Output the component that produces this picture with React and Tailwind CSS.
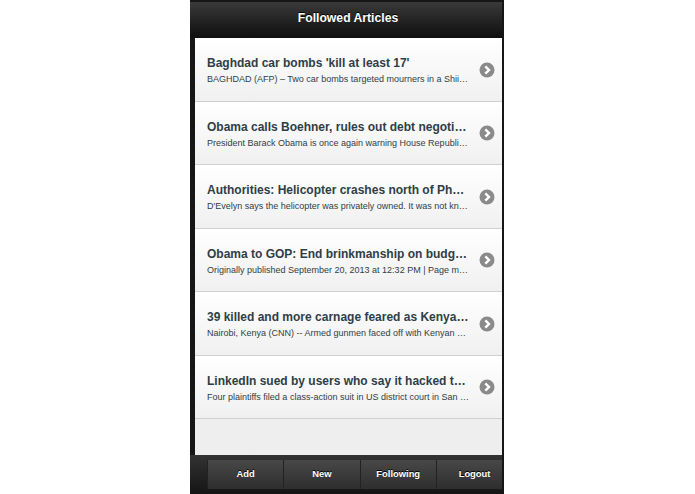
const articles = [
  {
    title: "Baghdad car bombs 'kill at least 17'",
    summary: "BAGHDAD (AFP) – Two car bombs targeted mourners in a Shii…",
  },
  {
    title: "Obama calls Boehner, rules out debt negoti…",
    summary: "President Barack Obama is once again warning House Republi…",
  },
  {
    title: "Authorities: Helicopter crashes north of Ph…",
    summary: "D'Evelyn says the helicopter was privately owned. It was not kn…",
  },
  {
    title: "Obama to GOP: End brinkmanship on budg…",
    summary: "Originally published September 20, 2013 at 12:32 PM | Page m…",
  },
  {
    title: "39 killed and more carnage feared as Kenya…",
    summary: "Nairobi, Kenya (CNN) -- Armed gunmen faced off with Kenyan …",
  },
  {
    title: "LinkedIn sued by users who say it hacked t…",
    summary: "Four plaintiffs filed a class-action suit in US district court in San …",
  },
];

const tabs = ["Add", "New", "Following", "Logout"];

function Chevron() {
  return (
    <svg width="16" height="16" viewBox="0 0 16 16" className="shrink-0">
      <circle cx="8" cy="8" r="7.5" fill="#8a8a8a" />
      <path d="M6.3 4.3 L10 8 L6.3 11.7" fill="none" stroke="#fff" strokeWidth="2.4" />
    </svg>
  );
}

export default function App() {
  return (
    <div className="flex h-[494px] w-[695px] justify-center overflow-hidden bg-white font-['Liberation_Sans',Arial,sans-serif]">
      <div className="ml-[-1px] flex h-full w-[314px] flex-col bg-[#161616] pr-[2px] pt-[2px]">
        {/* Header */}
        <div className="flex h-[36px] shrink-0 items-center justify-center bg-gradient-to-b from-[#3a3a3a] to-[#0f0f0f] pb-[4px] pl-[4px] text-[12.2px] font-bold text-white [text-shadow:0_-1px_0_#000]">
          Followed Articles
        </div>

        {/* List */}
        <div className="ml-[5px] flex h-[417px] shrink-0 flex-col bg-[#eeeeee]">
          {articles.map((article) => (
            <div
              key={article.title}
              className="flex h-[63.5px] shrink-0 items-center gap-[9px] border-b border-[#d0d0d0] bg-gradient-to-b from-white to-[#f0f0f0] pl-[12px] pr-[7px] pt-[1px]"
            >
              <div className="min-w-0 flex-1">
                <h3 className="mt-[1px] whitespace-nowrap text-[12px] font-bold leading-[17px] text-[#2f3e46]">
                  {article.title}
                </h3>
                <p className="mt-[1px] whitespace-nowrap text-[9px] leading-[12px] text-[#2f3e46]">
                  {article.summary}
                </p>
              </div>
              <Chevron />
            </div>
          ))}
        </div>

        {/* Footer tabs */}
        <div className="flex flex-1 overflow-hidden bg-gradient-to-b from-[#333333] to-[#151515] pb-[5px] pl-[17px] pt-[5px]">
          {tabs.map((tab) => (
            <div
              key={tab}
              className="flex w-[76.3px] shrink-0 items-center justify-center border-l border-[#222222] bg-gradient-to-b from-[#484848] to-[#2e2e2e] text-[9.4px] font-bold text-white [text-shadow:0_-1px_0_#000]"
            >
              {tab}
            </div>
          ))}
        </div>
      </div>
    </div>
  );
}
